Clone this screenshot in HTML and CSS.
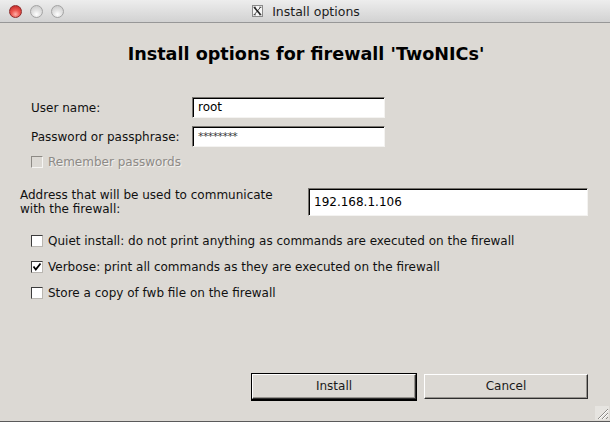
FILE: index.html
```html
<!DOCTYPE html>
<html>
<head>
<meta charset="utf-8">
<link rel="stylesheet" href="styles.css">
</head>
<body>
<div class="window">
  <div class="titlebar">
    <div class="lights">
      <span class="light red"></span>
      <span class="light"></span>
      <span class="light"></span>
    </div>
    <div class="title">
      <svg class="xicon" width="11" height="12" viewBox="0 0 11 12">
        <rect x="0.5" y="0.5" width="10" height="11" fill="#f6f6f6" stroke="#8a8a8a"/>
        <path d="M2.2 2.2 L8.6 9.8" stroke="#222" stroke-width="1.6"/>
        <path d="M8.6 2.2 L2.2 9.8" stroke="#222" stroke-width="0.8"/>
        <path d="M1.5 2.2 H4 M7.2 2.2 H9.5 M1.5 9.8 H4 M7.2 9.8 H9.5" stroke="#222" stroke-width="0.7"/>
      </svg>
      <span class="title-text">Install options</span>
    </div>
  </div>
  <div class="content">
    <h1 class="heading">Install options for firewall 'TwoNICs'</h1>
    <div class="login">
      <label class="lbl">User name:</label>
      <div class="field">root</div>
      <label class="lbl">Password or passphrase:</label>
      <div class="field pw">********</div>
    </div>
    <div class="check disabled remember">
      <span class="box"></span>
      <span class="ctext">Remember passwords</span>
    </div>
    <div class="address">
      <div class="addr-label">Address that will be used to communicate<br>with the firewall:</div>
      <div class="field addr">192.168.1.106</div>
    </div>
    <div class="options">
      <div class="check">
        <span class="box"></span>
        <span class="ctext">Quiet install: do not print anything as commands are executed on the firewall</span>
      </div>
      <div class="check">
        <span class="box"><svg width="10" height="10" viewBox="0 0 10 10"><path d="M1.5 4.5 L3.8 7.5 L8.5 1.5" fill="none" stroke="#000" stroke-width="1.8"/></svg></span>
        <span class="ctext">Verbose: print all commands as they are executed on the firewall</span>
      </div>
      <div class="check">
        <span class="box"></span>
        <span class="ctext">Store a copy of fwb file on the firewall</span>
      </div>
    </div>
    <div class="buttons">
      <div class="btn default">Install</div>
      <div class="btn">Cancel</div>
    </div>
  </div>
  <svg class="grip" width="14" height="14" viewBox="0 0 14 14">
    <rect width="14" height="14" fill="#e6e4e0"/>
    <path d="M3 13 L13 3 M7 13 L13 7 M11 13 L13 11" stroke="#8d8b87" stroke-width="1"/>
    <path d="M4 13 L13 4 M8 13 L13 8" stroke="#fff" stroke-width="1"/>
  </svg>
</div>
</body>
</html>
```

FILE: styles.css
```css
html, body {
  margin: 0;
  padding: 0;
  background: #dcd9d4;
}

.window {
  position: relative;
  width: 610px;
  height: 422px;
  display: flex;
  flex-direction: column;
  background: #dcd9d4;
  box-sizing: border-box;
  border-bottom: 1px solid #5a5a5a;
  overflow: hidden;
  font-family: "DejaVu Sans", sans-serif;
  font-size: 12px;
  color: #111;
}

.titlebar {
  position: relative;
  height: 22px;
  flex: none;
  display: flex;
  align-items: center;
  justify-content: center;
  background: linear-gradient(#ededed, #d2d2d2);
  border-bottom: 1px solid #979797;
}

.lights {
  position: absolute;
  left: 9px;
  top: 5px;
  display: flex;
  gap: 8px;
}

.light {
  width: 13px;
  height: 13px;
  border-radius: 50%;
  box-sizing: border-box;
  border: 1px solid #a3a3a3;
  background: radial-gradient(circle at 50% 75%, #ffffff 0%, #e6e6e6 35%, #c4c4c4 100%);
}

.light.red {
  border-color: #8e2b2b;
  background: radial-gradient(circle at 50% 75%, #ffb0a8 0%, #ee5a52 40%, #b91e1e 100%);
}

.title {
  display: flex;
  align-items: center;
  gap: 9px;
  margin-left: 2px;
}

.xicon {
  display: block;
}

.title-text {
  font-size: 12.5px;
  color: #1c1c1c;
}

.content {
  flex: 1;
  display: flex;
  flex-direction: column;
}

.heading {
  margin: 20px 0 0 0;
  text-align: center;
  font-size: 17.6px;
  line-height: 22px;
  font-weight: bold;
  color: #000;
  padding-left: 2px;
}

.login {
  display: grid;
  grid-template-columns: 161px 193px;
  grid-auto-rows: 21px;
  row-gap: 8px;
  align-items: center;
  margin: 32px 0 0 31px;
}

.field {
  box-sizing: border-box;
  height: 21px;
  background: #fff;
  border: 1px solid;
  border-color: #77746f #f4f3f1 #f4f3f1 #77746f;
  box-shadow: inset 1px 1px 0 #000;
  padding: 0 4px 0 5px;
  line-height: 19px;
  font-size: 12px;
  color: #000;
}

.field.pw {
  font-size: 11px;
  color: #3a3a3a;
  letter-spacing: -0.6px;
}

.check {
  display: flex;
  align-items: center;
  gap: 5px;
  height: 14px;
  line-height: 14px;
}

.box {
  width: 12px;
  height: 12px;
  box-sizing: border-box;
  background: #fff;
  border: 1px solid;
  border-color: #3c3c3c #b9b6b1 #b9b6b1 #3c3c3c;
  display: flex;
  align-items: center;
  justify-content: center;
}

.box svg {
  display: block;
}

.check.disabled .box {
  background: #dcd9d4;
  border-color: #8d8a85 #f6f5f3 #f6f5f3 #8d8a85;
}

.check.disabled .ctext {
  color: #8d8a86;
  text-shadow: 1px 1px 0 #f2f1ef;
}

.remember {
  margin: 8px 0 0 31px;
}

.address {
  display: flex;
  align-items: center;
  margin: 19px 0 0 20px;
  height: 28px;
}

.addr-label {
  width: 288px;
  line-height: 13.5px;
  padding-top: 1px;
}

.field.addr {
  width: 280px;
  height: 28px;
  line-height: 26px;
}

.options {
  display: flex;
  flex-direction: column;
  gap: 12px;
  margin: 18px 0 0 31px;
}

.buttons {
  margin-top: auto;
  display: flex;
  justify-content: flex-end;
  align-items: center;
  gap: 8px;
  padding: 0 22px 22px 0;
}

.btn {
  width: 164px;
  height: 25px;
  box-sizing: border-box;
  border: 1px solid;
  border-color: #ffffff #2e2e2e #2e2e2e #ffffff;
  box-shadow: inset -1px -1px 0 #97948f;
  background: #dcd9d4;
  text-align: center;
  line-height: 22px;
  font-size: 12px;
  color: #1a1a1a;
}

.btn.default {
  box-shadow: 0 0 0 1px #000, inset -1px -1px 0 #97948f, 0 1px 0 1px #000;
}

.grip {
  position: absolute;
  right: 1px;
  bottom: 1px;
  display: block;
}
```
